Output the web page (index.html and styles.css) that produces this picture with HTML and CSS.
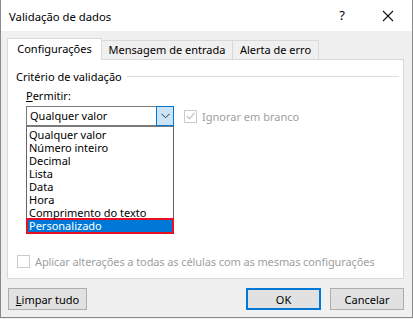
FILE: index.html
```
<!DOCTYPE html>
<html>
<head>
	<title>Validação de dados</title>
	<meta charset="utf-8"/>
	<link rel="stylesheet" href="styles.css">
</head>
<body>

<div class="window">
	<div class="titlebar">
		<span class="title">Validação de dados</span>
		<span class="help">?</span>
		<svg class="close" width="12" height="12" viewBox="0 0 12 12">
			<path d="M1 1 L11 11 M11 1 L1 11" stroke="#111" stroke-width="1.1" fill="none"/>
		</svg>
	</div>
	<div class="content">
		<div class="tabs">
			<div class="tab active">Configurações</div>
			<div class="tab">Mensagem de entrada</div>
			<div class="tab">Alerta de erro</div>
		</div>
		<div class="panel">
			<div class="group">
				<span>Critério de validação</span>
				<div class="line"></div>
			</div>
			<div class="label"><u>P</u>ermitir:</div>
			<div class="row">
				<div class="combo">
					<span class="value">Qualquer valor</span>
					<div class="arrow">
						<svg width="9" height="6" viewBox="0 0 9 6">
							<path d="M0.5 0.8 L4.5 4.8 L8.5 0.8" stroke="#333" stroke-width="1" fill="none"/>
						</svg>
					</div>
					<ul class="list">
						<li>Qualquer valor</li>
						<li>Número inteiro</li>
						<li>Decimal</li>
						<li>Lista</li>
						<li>Data</li>
						<li>Hora</li>
						<li>Comprimento do texto</li>
						<li class="selected">Personalizado</li>
					</ul>
				</div>
				<label class="check disabled">
					<span class="box">
						<svg width="12" height="12" viewBox="0 0 12 12">
							<path d="M2 6 L5 9 L10.5 2.5" stroke="#c4c4c4" stroke-width="1.3" fill="none"/>
						</svg>
					</span>
					Ignorar em branco
				</label>
			</div>
			<div class="spacer"></div>
			<label class="check disabled apply">
				<span class="box"></span>
				Aplicar alterações a todas as células com as mesmas configurações
			</label>
		</div>
		<div class="buttons">
			<button><u>L</u>impar tudo</button>
			<div class="grow"></div>
			<button class="default">OK</button>
			<button>Cancelar</button>
		</div>
	</div>
</div>

</body>
</html>
```
FILE: styles.css
```
* {
	margin: 0px;
	padding: 0px;
	box-sizing: border-box;
}

body {
	width: 413px;
	height: 319px;
	background-color: #f0f0f0;
	font-family: "Noto Sans", "Open Sans", sans-serif;
	font-size: 11px;
	line-height: 15px;
	color: #000;
	overflow: hidden;
	white-space: nowrap;
}

.window {
	width: 413px;
	height: 318px;
	border: 1px solid #8a8a8a;
	border-top: none;
	background-color: #f0f0f0;
	display: flex;
	flex-direction: column;
}

.titlebar {
	height: 31px;
	background-color: #fff;
	display: flex;
	align-items: center;
	padding-left: 8px;
}
	.titlebar .title {
		flex: 1;
		font-size: 11.3px;
		margin-top: 1px;
	}
	.titlebar .help {
		font-size: 13px;
		margin-right: 37px;
	}
	.titlebar .close {
		margin-right: 18px;
	}

.content {
	flex: 1;
	display: flex;
	flex-direction: column;
	padding: 7px 8px 0px 6px;
}

.tabs {
	display: flex;
	align-items: flex-end;
	height: 21px;
	position: relative;
	z-index: 1;
}
	.tab {
		flex: none;
		height: 19px;
		line-height: 17px;
		text-align: center;
		overflow: hidden;
		border: 1px solid #d9d9d9;
		border-bottom: none;
		border-left: none;
		background-color: #f0f0f0;
	}
	.tab.active {
		height: 22px;
		width: 95px;
		line-height: 20px;
		margin-bottom: -1px;
		border-left: 1px solid #d9d9d9;
		background-color: #fff;
	}
	.tab:nth-child(2) {
		width: 131px;
	}
	.tab:nth-child(3) {
		width: 86px;
	}

.panel {
	height: 220px;
	width: 397px;
	background-color: #fff;
	border: 1px solid #d9d9d9;
	display: flex;
	flex-direction: column;
	padding: 8px 0px 0px 8px;
}
	.group {
		display: flex;
		align-items: center;
		height: 16px;
	}
		.group .line {
			flex: 1;
			height: 1px;
			background-color: #dcdcdc;
			margin: 1px 4px 0px 5px;
		}
	.label {
		margin: 4px 0px 0px 10px;
		height: 16px;
		line-height: 16px;
	}
	.row {
		display: flex;
		margin-top: 2px;
		margin-left: 10px;
	}

.combo {
	width: 148px;
	height: 20px;
	border: 1px solid #7a7a7a;
	display: flex;
	position: relative;
}
	.combo .value {
		flex: 1;
		line-height: 18px;
		padding-left: 3px;
	}
	.combo .arrow {
		width: 18px;
		height: 20px;
		margin: -1px -1px 0px 0px;
		border: 1px solid #0078d7;
		background-color: #cce4f7;
		display: flex;
		align-items: center;
		justify-content: center;
	}
	.list {
		position: absolute;
		left: -1px;
		top: 19px;
		width: 148px;
		list-style: none;
		background-color: #fff;
		border: 1px solid #646464;
		border-top: 1px solid #7a7a7a;
		z-index: 5;
	}
		.list li {
			height: 13px;
			line-height: 13px;
			padding-left: 2px;
		}
		.list li:first-child {
			margin-top: 1px;
		}
		.list li.selected {
			height: 16px;
			line-height: 12px;
			margin: -1px -1px -1px -1px;
			background-color: #0078d7;
			color: #fff;
			border: 2px solid #e81123;
			padding-left: 1px;
		}

.check {
	display: flex;
	align-items: center;
}
	.check .box {
		width: 13px;
		height: 13px;
		border: 1px solid #cccccc;
		margin-right: 5px;
		display: flex;
		align-items: center;
		justify-content: center;
	}
	.check.disabled {
		color: #a0a0a0;
	}
	.row .check {
		margin-left: 10px;
		height: 20px;
	}
	.apply {
		margin: 0px 0px 9px 1px;
		letter-spacing: -0.1px;
	}

.spacer {
	flex: 1;
}

.buttons {
	display: flex;
	margin-top: 9px;
	padding-left: 1px;
}
	button {
		width: 79px;
		height: 22px;
		font-family: inherit;
		font-size: 11px;
		background-color: #e1e1e1;
		border: 1px solid #adadad;
		color: #000;
	}
	.grow {
		flex: 1;
	}
	button.default {
		width: 75px;
		border: 2px solid #0078d7;
		margin-right: 9px;
	}
	.buttons button:last-child {
		width: 74px;
	}
```
